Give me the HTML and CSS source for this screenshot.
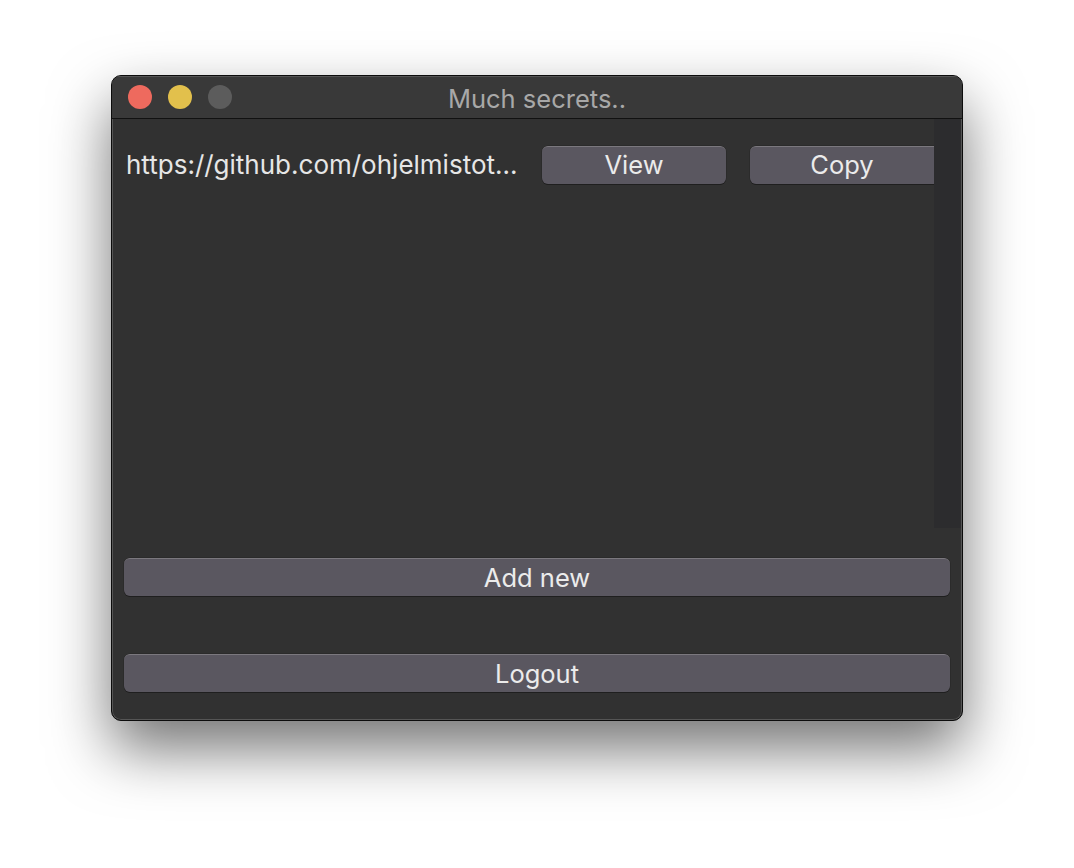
FILE: index.html
```html
<!DOCTYPE html>
<html>
<head>
<meta charset="utf-8">
<link rel="stylesheet" href="styles.css">
</head>
<body>
<div class="window">
  <div class="titlebar">
    <div class="lights">
      <span class="light red"></span>
      <span class="light yellow"></span>
      <span class="light grey"></span>
    </div>
    <div class="title">Much secrets..</div>
  </div>
  <div class="content">
    <div class="list">
      <div class="rows">
        <div class="row">
          <span class="url">https://github.com/ohjelmistot...</span>
          <button class="btn btn-view">View</button>
          <button class="btn btn-copy">Copy</button>
        </div>
      </div>
      <div class="track"></div>
    </div>
    <div class="actions">
      <button class="btn btn-wide btn-add">Add new</button>
      <button class="btn btn-wide btn-logout">Logout</button>
    </div>
  </div>
</div>
</body>
</html>
```
FILE: styles.css
```css
html, body {
  margin: 0;
  padding: 0;
  background: #ffffff;
}
body {
  width: 1074px;
  height: 868px;
  overflow: hidden;
  font-family: "Inter", "Liberation Sans", sans-serif;
}
.window {
  box-sizing: border-box;
  margin: 75px 0 0 111px;
  width: 852px;
  height: 646px;
  border: 1px solid #0c0c0c;
  border-radius: 10px;
  background: #313131;
  box-shadow: inset 0 0 0 1px #555555, 0 28px 60px rgba(0, 0, 0, 0.55);
  display: flex;
  flex-direction: column;
  overflow: hidden;
}
.titlebar {
  position: relative;
  height: 42px;
  flex: none;
  background: #393939;
  border-bottom: 1px solid #111111;
  box-shadow: inset 0 1px 0 #555555;
  display: flex;
  align-items: center;
}
.lights {
  display: flex;
  gap: 16px;
  padding-left: 16px;
}
.light {
  width: 24px;
  height: 24px;
  border-radius: 50%;
  display: block;
}
.red { background: #ee6a5e; }
.yellow { background: #e2c04c; }
.grey { background: #5c5c5c; }
.title {
  position: absolute;
  left: 0;
  right: 0;
  top: 0;
  bottom: 0;
  display: flex;
  align-items: center;
  justify-content: center;
  color: #a8a8a8;
  font-size: 25.5px;
  padding-top: 3px;
  pointer-events: none;
}
.content {
  flex: 1;
  display: flex;
  flex-direction: column;
}
.list {
  height: 409px;
  display: flex;
  flex: none;
}
.rows {
  flex: 1;
  overflow: hidden;
}
.row {
  display: flex;
  align-items: center;
  padding: 26px 0 0 14px;
  height: 39px;
  white-space: nowrap;
}
.url {
  color: #e6e6e6;
  font-size: 26px;
  width: 402px;
  flex: none;
  overflow: hidden;
}
.track {
  width: 27px;
  flex: none;
  background: #2c2c2e;
  margin-right: 1px;
}
.btn {
  box-sizing: border-box;
  font-family: inherit;
  font-size: 25.5px;
  color: #ebebeb;
  background: #5a5760;
  border: none;
  border-top: 1px solid #7b787e;
  border-radius: 6px;
  box-shadow: 0 1px 0 #1f1f1f, 0 0 0 0.5px #262626;
  height: 38px;
  padding: 0;
  line-height: 36px;
  flex: none;
}
.btn-view {
  width: 184px;
  margin-left: 14px;
}
.btn-copy {
  width: 184px;
  margin-left: 24px;
  border-top-right-radius: 0;
  border-bottom-right-radius: 0;
}
.actions {
  display: flex;
  flex-direction: column;
  padding: 30px 12px 0 12px;
  gap: 58px;
}
.btn-wide {
  width: 100%;
}
```
